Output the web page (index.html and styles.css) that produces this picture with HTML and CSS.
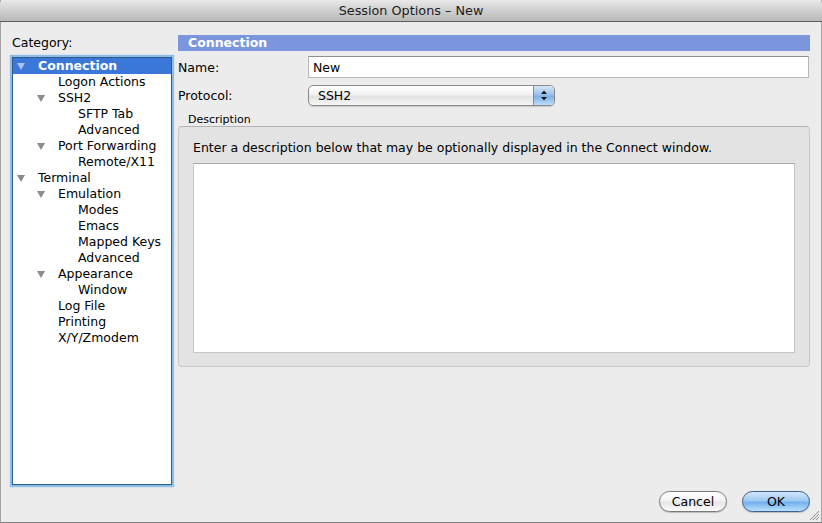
FILE: index.html
```html
<!DOCTYPE html>
<html>
<head>
<meta charset="utf-8">
<link rel="stylesheet" href="styles.css">
</head>
<body>
<div class="window">
  <div class="titlebar">Session Options – New</div>
  <div class="main">
    <div class="leftcol">
      <div class="cat-label">Category:</div>
      <div class="tree">
        <div class="row sel l0"><span class="tri"></span><span>Connection</span></div>
        <div class="row l1"><span class="notri"></span><span>Logon Actions</span></div>
        <div class="row l1"><span class="tri"></span><span>SSH2</span></div>
        <div class="row l2"><span class="notri"></span><span>SFTP Tab</span></div>
        <div class="row l2"><span class="notri"></span><span>Advanced</span></div>
        <div class="row l1"><span class="tri"></span><span>Port Forwarding</span></div>
        <div class="row l2"><span class="notri"></span><span>Remote/X11</span></div>
        <div class="row l0"><span class="tri"></span><span>Terminal</span></div>
        <div class="row l1"><span class="tri"></span><span>Emulation</span></div>
        <div class="row l2"><span class="notri"></span><span>Modes</span></div>
        <div class="row l2"><span class="notri"></span><span>Emacs</span></div>
        <div class="row l2"><span class="notri"></span><span>Mapped Keys</span></div>
        <div class="row l2"><span class="notri"></span><span>Advanced</span></div>
        <div class="row l1"><span class="tri"></span><span>Appearance</span></div>
        <div class="row l2"><span class="notri"></span><span>Window</span></div>
        <div class="row l1"><span class="notri"></span><span>Log File</span></div>
        <div class="row l1"><span class="notri"></span><span>Printing</span></div>
        <div class="row l1"><span class="notri"></span><span>X/Y/Zmodem</span></div>
      </div>
    </div>
    <div class="rightcol">
      <div class="header">Connection</div>
      <div class="field name-row">
        <label class="flabel">Name:</label>
        <div class="textfield">New</div>
      </div>
      <div class="field proto-row">
        <label class="flabel">Protocol:</label>
        <div class="popup">
          <span class="popup-text">SSH2</span>
          <span class="popup-arrows">
            <svg width="8" height="11" viewBox="0 0 8 11"><path d="M4 0.5 L7 4 L1 4 Z M1 7 L7 7 L4 10.5 Z" fill="#1a1a1a"/></svg>
          </span>
        </div>
      </div>
      <div class="group-label">Description</div>
      <div class="group">
        <div class="group-text">Enter a description below that may be optionally displayed in the Connect window.</div>
        <div class="textarea"></div>
      </div>
    </div>
  </div>
  <div class="footer">
    <button class="btn cancel">Cancel</button>
    <button class="btn ok">OK</button>
  </div>
  <svg class="grip" width="11" height="11" viewBox="0 0 11 11">
    <path d="M10 1 L1 10 M10 4 L4 10 M10 7 L7 10" stroke="#8f8f8f" stroke-width="1"/>
  </svg>
</div>
</body>
</html>
```
FILE: styles.css
```css
html, body {
  margin: 0;
  padding: 0;
  background: #ececec;
}
body {
  font-family: "DejaVu Sans", "Liberation Sans", sans-serif;
  font-size: 12.5px;
  color: #000;
}
.window {
  position: relative;
  width: 822px;
  height: 523px;
  box-sizing: border-box;
  border-left: 1px solid #a3a3a3;
  border-right: 1px solid #a3a3a3;
  border-bottom: 1px solid #7e7e7e;
  background: #ececec;
  display: flex;
  flex-direction: column;
}
.titlebar {
  height: 22px;
  box-sizing: border-box;
  border-bottom: 1px solid #5e5e5e;
  background: linear-gradient(#e9e9e9, #cfcfcf 50%, #b9b9b9);
  text-align: center;
  line-height: 21px;
  font-size: 12.8px;
  color: #1c1c1c;
  margin: 0 -1px;
  border-radius: 4px 4px 0 0;
}
.main {
  display: flex;
  gap: 6px;
  padding: 13px 11px 0 11px;
}
.leftcol {
  width: 160px;
  display: flex;
  flex-direction: column;
}
.cat-label {
  line-height: 16px;
  margin-bottom: 6px;
}
.tree {
  height: 428px;
  box-sizing: border-box;
  border: 1px solid #2f5b86;
  background: #fff;
  box-shadow: 0 0 1px 2px #8cbde9;
}
.row {
  height: 16px;
  line-height: 16px;
  display: flex;
  align-items: center;
  white-space: nowrap;
}
.row.l0 { padding-left: 4px; }
.row.l1 { padding-left: 24px; }
.row.l2 { padding-left: 44px; }
.row.sel {
  background: #3b77d8;
  color: #fff;
  font-weight: bold;
}
.tri, .notri {
  width: 8px;
  height: 7px;
  margin-right: 13px;
  flex: none;
}
.tri {
  width: 0;
  height: 0;
  border-left: 4px solid transparent;
  border-right: 4px solid transparent;
  border-top: 7px solid #8b8b8b;
}
.sel .tri {
  border-top-color: #a9c3ea;
}
.rightcol {
  width: 632px;
  display: flex;
  flex-direction: column;
}
.header {
  height: 16px;
  line-height: 16px;
  background: #7b96dd;
  color: #fff;
  font-weight: bold;
  padding-left: 10px;
}
.field {
  display: flex;
  align-items: center;
}
.name-row { margin-top: 5px; }
.proto-row { margin-top: 7px; }
.flabel {
  width: 130px;
  flex: none;
}
.textfield {
  width: 501px;
  height: 22px;
  box-sizing: border-box;
  border: 1px solid #b7b7b7;
  border-top-color: #8e8e8e;
  background: #fff;
  padding-left: 4px;
  line-height: 21px;
}
.popup {
  width: 247px;
  height: 21px;
  box-sizing: border-box;
  border: 1px solid #8a8a8a;
  border-radius: 5px;
  background: linear-gradient(#ffffff, #f2f2f2 45%, #e2e2e2 55%, #f6f6f6);
  display: flex;
  overflow: hidden;
  box-shadow: 0 1px 1px rgba(0,0,0,0.15);
}
.popup-text {
  flex: 1;
  padding-left: 9px;
  line-height: 19px;
}
.popup-arrows {
  width: 20px;
  border-left: 1px solid #6f8fb8;
  background: linear-gradient(#d5e6f8, #9dc3ec 45%, #7fb0e6 55%, #bcdcfb);
  display: flex;
  align-items: center;
  justify-content: center;
}
.group-label {
  font-size: 11px;
  line-height: 13px;
  margin-top: 7px;
  padding-left: 10px;
}
.group {
  height: 241px;
  box-sizing: border-box;
  background: #e3e3e3;
  border: 1px solid #c9c9c9;
  border-top-color: #b3b3b3;
  border-radius: 4px;
  padding: 13px 14px 0 14px;
}
.group-text {
  line-height: 16px;
  margin-bottom: 7px;
}
.textarea {
  width: 602px;
  height: 190px;
  box-sizing: border-box;
  background: #fff;
  border: 1px solid #c6c6c6;
  border-top-color: #a9a9a9;
}
.footer {
  margin-top: auto;
  display: flex;
  justify-content: flex-end;
  gap: 15px;
  padding: 0 11px 10px 0;
}
.btn {
  width: 68px;
  height: 21px;
  border-radius: 11px;
  font-family: "DejaVu Sans", "Liberation Sans", sans-serif;
  font-size: 12.5px;
  color: #000;
  padding: 0;
  line-height: 19px;
}
.cancel {
  border: 1px solid #7a7a7a;
  background: linear-gradient(#ffffff, #f4f4f4 45%, #e6e6e6 55%, #fbfbfb);
  box-shadow: 0 1px 1px rgba(0,0,0,0.2);
}
.ok {
  border: 1px solid #3d5f8f;
  background: linear-gradient(#d3e7fb, #9ec9f1 45%, #74b1ec 55%, #b8e0ff);
  box-shadow: 0 1px 1px rgba(0,0,0,0.2);
}
.grip {
  position: absolute;
  right: 1px;
  bottom: 1px;
}
```
